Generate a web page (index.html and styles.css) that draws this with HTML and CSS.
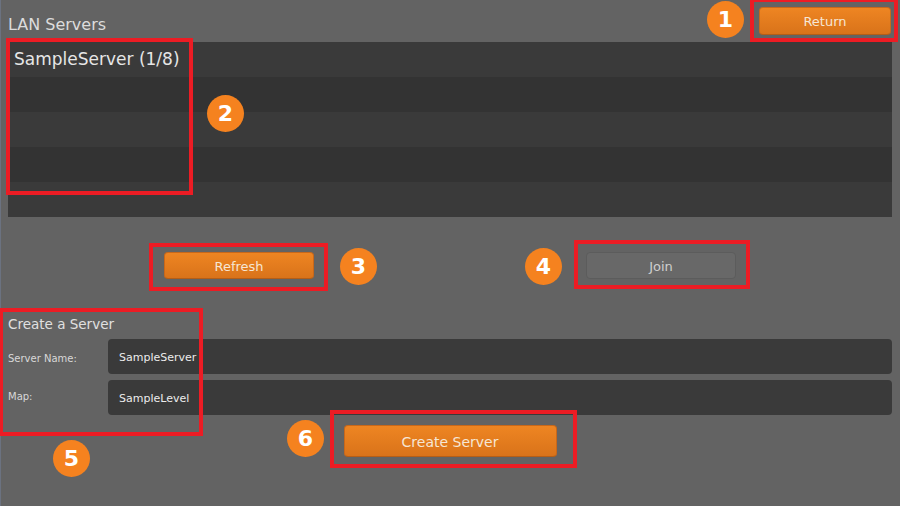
FILE: index.html
```html
<!DOCTYPE html>
<html>
<head>
<meta charset="utf-8">
<link rel="stylesheet" href="styles.css">
</head>
<body>
<div class="screen">
  <div class="header">
    <div class="title">LAN Servers</div>
    <button class="btn btn-orange btn-return">Return</button>
  </div>
  <div class="list">
    <div class="row row-a">SampleServer (1/8)</div>
    <div class="row row-b"></div>
    <div class="row row-a"></div>
    <div class="row row-b"></div>
    <div class="row row-a"></div>
  </div>
  <div class="actions">
    <button class="btn btn-orange btn-wide">Refresh</button>
    <button class="btn btn-gray btn-wide">Join</button>
  </div>
  <div class="create">
    <div class="create-title">Create a Server</div>
    <div class="field">
      <div class="label">Server Name:</div>
      <div class="input">SampleServer</div>
    </div>
    <div class="field">
      <div class="label label-map">Map:</div>
      <div class="input">SampleLevel</div>
    </div>
    <div class="create-row">
      <button class="btn btn-orange btn-create">Create Server</button>
    </div>
  </div>

  <div class="mark mark-1"></div>
  <div class="mark mark-2"></div>
  <div class="mark mark-3"></div>
  <div class="mark mark-4"></div>
  <div class="mark mark-5"></div>
  <div class="mark mark-6"></div>

  <div class="badge badge-1">1</div>
  <div class="badge badge-2">2</div>
  <div class="badge badge-3">3</div>
  <div class="badge badge-4">4</div>
  <div class="badge badge-5">5</div>
  <div class="badge badge-6">6</div>
</div>
</body>
</html>
```

FILE: styles.css
```css
html, body {
  margin: 0;
  padding: 0;
  background: #636363;
}

.screen {
  position: relative;
  width: 900px;
  height: 506px;
  box-sizing: border-box;
  padding: 7px 8px 0 8px;
  background: #636363;
  box-shadow: inset 1px 0 0 #6b7280;
  font-family: "DejaVu Sans", "Open Sans", sans-serif;
  color: #e2e2e2;
  overflow: hidden;
}

.header {
  display: flex;
  justify-content: space-between;
  align-items: center;
  height: 28px;
}

.title {
  font-size: 16px;
  color: #dcdcdc;
  padding-top: 6px;
}

.btn {
  font-family: "DejaVu Sans", "Open Sans", sans-serif;
  border-radius: 4px;
  box-sizing: border-box;
  padding: 1px 0 0 0;
  cursor: pointer;
}

.btn-orange {
  background: linear-gradient(#ee8522, #d9731a);
  border: 1px solid #c8681a;
  border-bottom-color: #b65e16;
  color: #f6e6d4;
}

.btn-gray {
  background: #686868;
  border: 1px solid #5c5c5c;
  color: #cfcfcf;
}

.btn-return {
  width: 132px;
  height: 28px;
  font-size: 13px;
  margin-right: 1px;
}

.list {
  margin-top: 7px;
  display: flex;
  flex-direction: column;
}

.row {
  height: 35px;
  box-sizing: border-box;
  padding: 7px 0 0 6px;
  font-size: 17px;
  color: #e6e6e6;
}

.row-a { background: #3a3a3a; }
.row-b { background: #333333; }

.actions {
  display: flex;
  justify-content: center;
  gap: 272px;
  margin-top: 35px;
}

.btn-wide {
  width: 150px;
  height: 27px;
  font-size: 13px;
}

.create {
  margin-top: 34px;
}

.create-title {
  font-size: 13.5px;
  color: #e0e0e0;
  height: 23px;
  padding-top: 3px;
}

.field {
  display: flex;
  align-items: stretch;
}

.field + .field { margin-top: 6px; }

.label {
  width: 100px;
  font-size: 10px;
  color: #d8d8d8;
  padding-top: 14px;
}

.label-map {
  padding-top: 11px;
}

.input {
  flex: 1;
  height: 35px;
  box-sizing: border-box;
  background: #3a3a3a;
  border-radius: 4px;
  padding: 12px 0 0 11px;
  font-size: 11px;
  color: #ececec;
}

.create-row {
  display: flex;
  justify-content: center;
  margin-top: 10px;
}

.btn-create {
  width: 213px;
  height: 32px;
  font-size: 14px;
}

/* annotation overlays */
.mark {
  position: absolute;
  border: 4px solid #ec1c24;
  box-sizing: border-box;
}

.mark-1 { left: 750px; top: -2px; width: 148px; height: 44px; }
.mark-2 { left: 6px; top: 38px; width: 187px; height: 157px; }
.mark-3 { left: 149px; top: 243px; width: 179px; height: 48px; }
.mark-4 { left: 574px; top: 240px; width: 176px; height: 49px; }
.mark-5 { left: -1px; top: 308px; width: 204px; height: 128px; }
.mark-6 { left: 330px; top: 410px; width: 247px; height: 58px; }

.badge {
  position: absolute;
  width: 37px;
  height: 37px;
  border-radius: 50%;
  background: #f5821f;
  color: #ffffff;
  font-family: "DejaVu Sans", sans-serif;
  font-weight: bold;
  font-size: 22px;
  display: flex;
  align-items: center;
  justify-content: center;
}

.badge-1 { left: 707px; top: 1px; }
.badge-2 { left: 207px; top: 95px; }
.badge-3 { left: 340px; top: 248px; }
.badge-4 { left: 525px; top: 248px; }
.badge-5 { left: 53px; top: 440px; }
.badge-6 { left: 287px; top: 420px; }
```
